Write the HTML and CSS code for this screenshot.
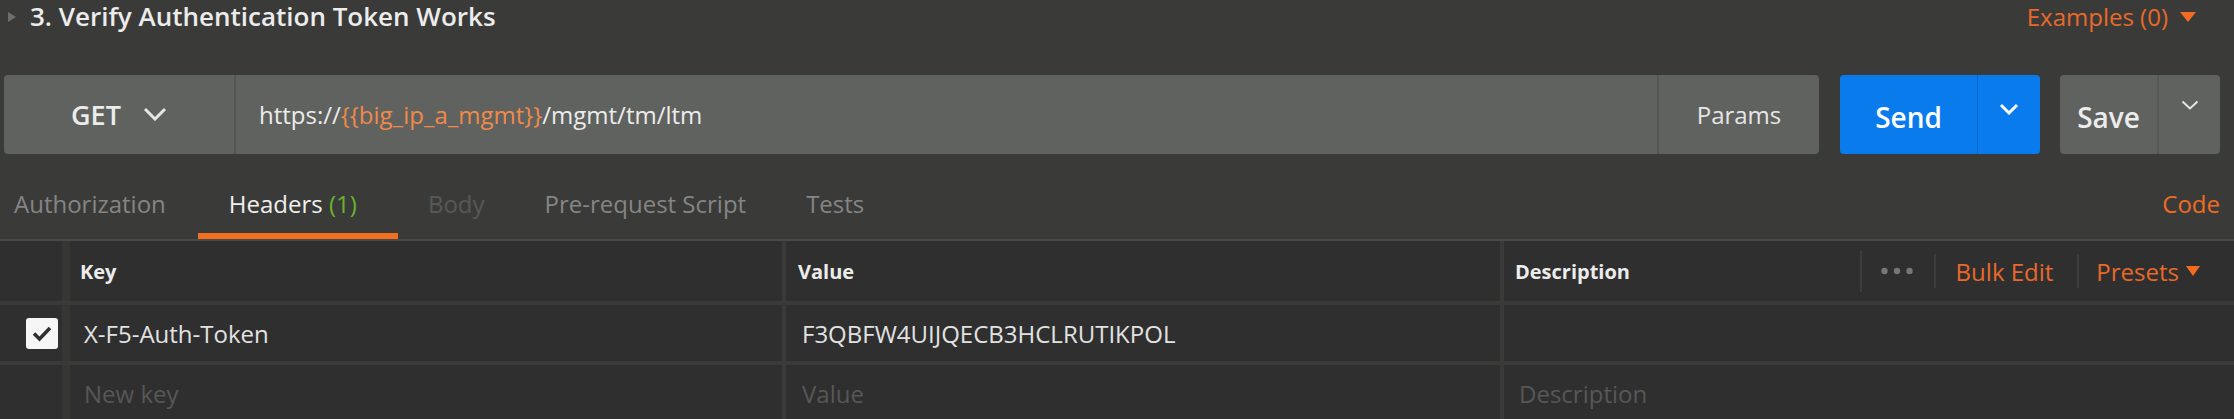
FILE: index.html
```html
<!DOCTYPE html>
<html lang="en">
<head>
<meta charset="utf-8">
<title>Verify Authentication Token Works</title>
<link rel="stylesheet" href="styles.css">
</head>
<body>
<div class="app">
  <div class="title-row">
    <span class="caret"></span>
    <h1 class="title">3. Verify Authentication Token Works</h1>
    <div class="examples">Examples (0)<span class="tri-down"></span></div>
  </div>

  <div class="url-row">
    <div class="url-box">
      <div class="method">
        <span>GET</span>
        <svg class="chev-get" width="24" height="14" viewBox="0 0 24 14"><path d="M2 2 L12 12 L22 2" fill="none" stroke="#e6e6e6" stroke-width="3"/></svg>
      </div>
      <div class="url">https://<span class="var">{{big_ip_a_mgmt}}</span>/mgmt/tm/ltm</div>
      <div class="params">Params</div>
    </div>
    <div class="send">
      <div class="send-label">Send</div>
      <div class="send-drop">
        <svg width="20" height="12" viewBox="0 0 20 12"><path d="M2 2 L10 10 L18 2" fill="none" stroke="#ffffff" stroke-width="3"/></svg>
      </div>
    </div>
    <div class="save">
      <div class="save-label">Save</div>
      <div class="save-drop">
        <svg width="18" height="10" viewBox="0 0 18 10"><path d="M1.5 1.5 L9 8.5 L16.5 1.5" fill="none" stroke="#e6e6e6" stroke-width="2"/></svg>
      </div>
    </div>
  </div>

  <div class="tabs-row">
    <div class="tab tab-first tab-muted">Authorization</div>
    <div class="tab tab-active">Headers <span class="count">(1)</span></div>
    <div class="tab tab-disabled">Body</div>
    <div class="tab tab-muted">Pre-request Script</div>
    <div class="tab tab-muted">Tests</div>
    <div class="code">Code</div>
  </div>

  <div class="table">
    <div class="row row-head">
      <div class="c-check"></div>
      <div class="c-key"><span class="head-label">Key</span></div>
      <div class="c-val"><span class="head-label">Value</span></div>
      <div class="c-desc head-desc">
        <span class="head-label">Description</span>
        <div class="head-tools">
          <span class="sep sep-tall"></span>
          <svg class="dots" width="32" height="8" viewBox="0 0 32 8"><circle cx="3.5" cy="4" r="3.2" fill="#777"/><circle cx="16" cy="4" r="3.2" fill="#777"/><circle cx="28.5" cy="4" r="3.2" fill="#777"/></svg>
          <span class="sep"></span>
          <span class="bulk">Bulk Edit</span>
          <span class="sep"></span>
          <span class="presets">Presets</span>
          <span class="tri-down tri-presets"></span>
        </div>
      </div>
    </div>
    <div class="row">
      <div class="c-check">
        <svg class="checkbox" width="32" height="31" viewBox="0 0 32 31"><rect x="0" y="0" width="32" height="31" rx="3" fill="#f6f6f6"/><path d="M8 15.5 L13.5 21 L24 10" fill="none" stroke="#2f2f2f" stroke-width="3.5"/></svg>
      </div>
      <div class="c-key cell-text">X-F5-Auth-Token</div>
      <div class="c-val cell-text">F3QBFW4UIJQECB3HCLRUTIKPOL</div>
      <div class="c-desc cell-text"></div>
    </div>
    <div class="row">
      <div class="c-check"></div>
      <div class="c-key cell-text placeholder">New key</div>
      <div class="c-val cell-text placeholder">Value</div>
      <div class="c-desc cell-text placeholder">Description</div>
    </div>
  </div>
</div>
</body>
</html>
```

FILE: styles.css
```css
* { box-sizing: border-box; }

html, body {
  margin: 0;
  padding: 0;
  background: #3a3b38;
}

body {
  font-family: "Open Sans", "Noto Sans", sans-serif;
  color: #e6e6e6;
  width: 2234px;
  height: 419px;
  overflow: hidden;
}

.app {
  display: flex;
  flex-direction: column;
}

/* Title row */
.title-row {
  height: 33px;
  display: flex;
  align-items: center;
  padding: 0 38px 0 8px;
}

.caret {
  width: 0;
  height: 0;
  border-left: 8px solid #6e6f6c;
  border-top: 5px solid transparent;
  border-bottom: 5px solid transparent;
  margin-right: 14px;
}

.title {
  margin: 0;
  font-size: 26px;
  font-weight: 600;
  color: #ececec;
  line-height: 33px;
  flex: 1;
}

.examples {
  display: flex;
  align-items: center;
  font-size: 24px;
  color: #e8692a;
  line-height: 33px;
}

.tri-down {
  width: 0;
  height: 0;
  border-top: 10px solid #f26b21;
  border-left: 8px solid transparent;
  border-right: 8px solid transparent;
  margin-left: 12px;
}

/* URL row */
.url-row {
  margin-top: 42px;
  height: 79px;
  display: flex;
  padding: 0 14px 0 4px;
}

.url-box {
  width: 1815px;
  height: 79px;
  background: #60625f;
  border-radius: 4px;
  display: flex;
  align-items: stretch;
}

.method {
  width: 232px;
  border-right: 2px solid #545652;
  display: flex;
  align-items: center;
  justify-content: center;
  gap: 22px;
  font-size: 27px;
  font-weight: 600;
  color: #ececec;
}

.chev-get { margin-top: -2px; }

.url {
  flex: 1;
  display: flex;
  align-items: center;
  padding-left: 23px;
  font-size: 24px;
  color: #ececec;
  white-space: pre;
}

.var { color: #f08a4b; }

.params {
  width: 162px;
  border-left: 2px solid #545652;
  display: flex;
  align-items: center;
  justify-content: center;
  font-size: 24px;
  color: #e6e6e6;
}

.send {
  margin-left: 21px;
  width: 200px;
  background: #097bed;
  border-radius: 4px;
  display: flex;
}

.send-label {
  width: 138px;
  border-right: 1px solid #0868c9;
  display: flex;
  align-items: center;
  justify-content: center;
  padding-top: 4px;
  font-size: 28px;
  font-weight: 600;
  color: #ffffff;
}

.send-drop {
  flex: 1;
  display: flex;
  align-items: center;
  justify-content: center;
  padding-bottom: 12px;
}

.save {
  margin-left: 20px;
  width: 160px;
  background: #60625f;
  border-radius: 4px;
  display: flex;
}

.save-label {
  width: 99px;
  border-right: 2px solid #555753;
  display: flex;
  align-items: center;
  justify-content: center;
  padding-top: 4px;
  font-size: 28px;
  font-weight: 600;
  color: #ececec;
}

.save-drop {
  flex: 1;
  display: flex;
  align-items: center;
  justify-content: center;
  padding-bottom: 20px;
}

/* Tabs */
.tabs-row {
  margin-top: 14px;
  display: flex;
  align-items: flex-end;
  border-bottom: 2px solid #4a4b48;
  padding-right: 14px;
}

.tab {
  padding: 20px 30px 13px 30px;
  line-height: 32px;
  font-size: 24px;
  border-bottom: 6px solid transparent;
  white-space: nowrap;
}

.tab-first { padding-left: 14px; padding-right: 32px; }

.tab-muted { color: #858585; }
.tab-disabled { color: #585858; }

.tab-active {
  color: #f0f0f0;
  border-bottom-color: #f37021;
  padding-left: 31px;
  padding-right: 41px;
}

.count { color: #6cb22b; }

.code {
  margin-left: auto;
  padding: 20px 0 19px 0;
  line-height: 32px;
  font-size: 24px;
  color: #ef6c24;
}

/* Table */
.table {
  background: #2f2f2f;
  display: flex;
  flex-direction: column;
}

.row {
  display: flex;
  height: 56px;
  border-top: 4px solid #3a3b38;
  box-sizing: content-box;
}

.row-head {
  height: 60px;
  border-top: none;
}

.c-check {
  width: 62px;
  display: flex;
  align-items: center;
  padding-left: 26px;
}

.c-key {
  width: 720px;
  border-left: 8px solid #363734;
  display: flex;
  align-items: center;
  padding-left: 10px;
}

.c-val {
  width: 718px;
  border-left: 4px solid #3a3b38;
  display: flex;
  align-items: center;
  padding-left: 12px;
}

.c-desc {
  flex: 1;
  border-left: 4px solid #3a3b38;
  display: flex;
  align-items: center;
  padding-left: 11px;
}

.head-label {
  font-size: 20px;
  font-weight: 700;
  color: #ececec;
}

.head-desc {
  justify-content: space-between;
  padding-right: 34px;
}

.head-tools {
  display: flex;
  align-items: center;
  font-size: 24px;
  color: #e8692a;
}

.sep {
  width: 2px;
  height: 34px;
  background: #3e3f3c;
}

.sep-tall { height: 41px; }

.dots { margin: 0 21px 0 19px; }

.bulk { margin: 0 24px 0 20px; }

.presets { margin-left: 17px; }

.tri-presets {
  margin-left: 7px;
  border-top-width: 10px;
  border-left-width: 7px;
  border-right-width: 7px;
}

.cell-text {
  font-size: 24px;
  color: #e2e2e2;
}

.c-key.cell-text { padding-left: 14px; }
.c-val.cell-text { padding-left: 16px; }
.c-desc.cell-text { padding-left: 15px; }

.placeholder { color: #575757; }

.checkbox { display: block; }
```
